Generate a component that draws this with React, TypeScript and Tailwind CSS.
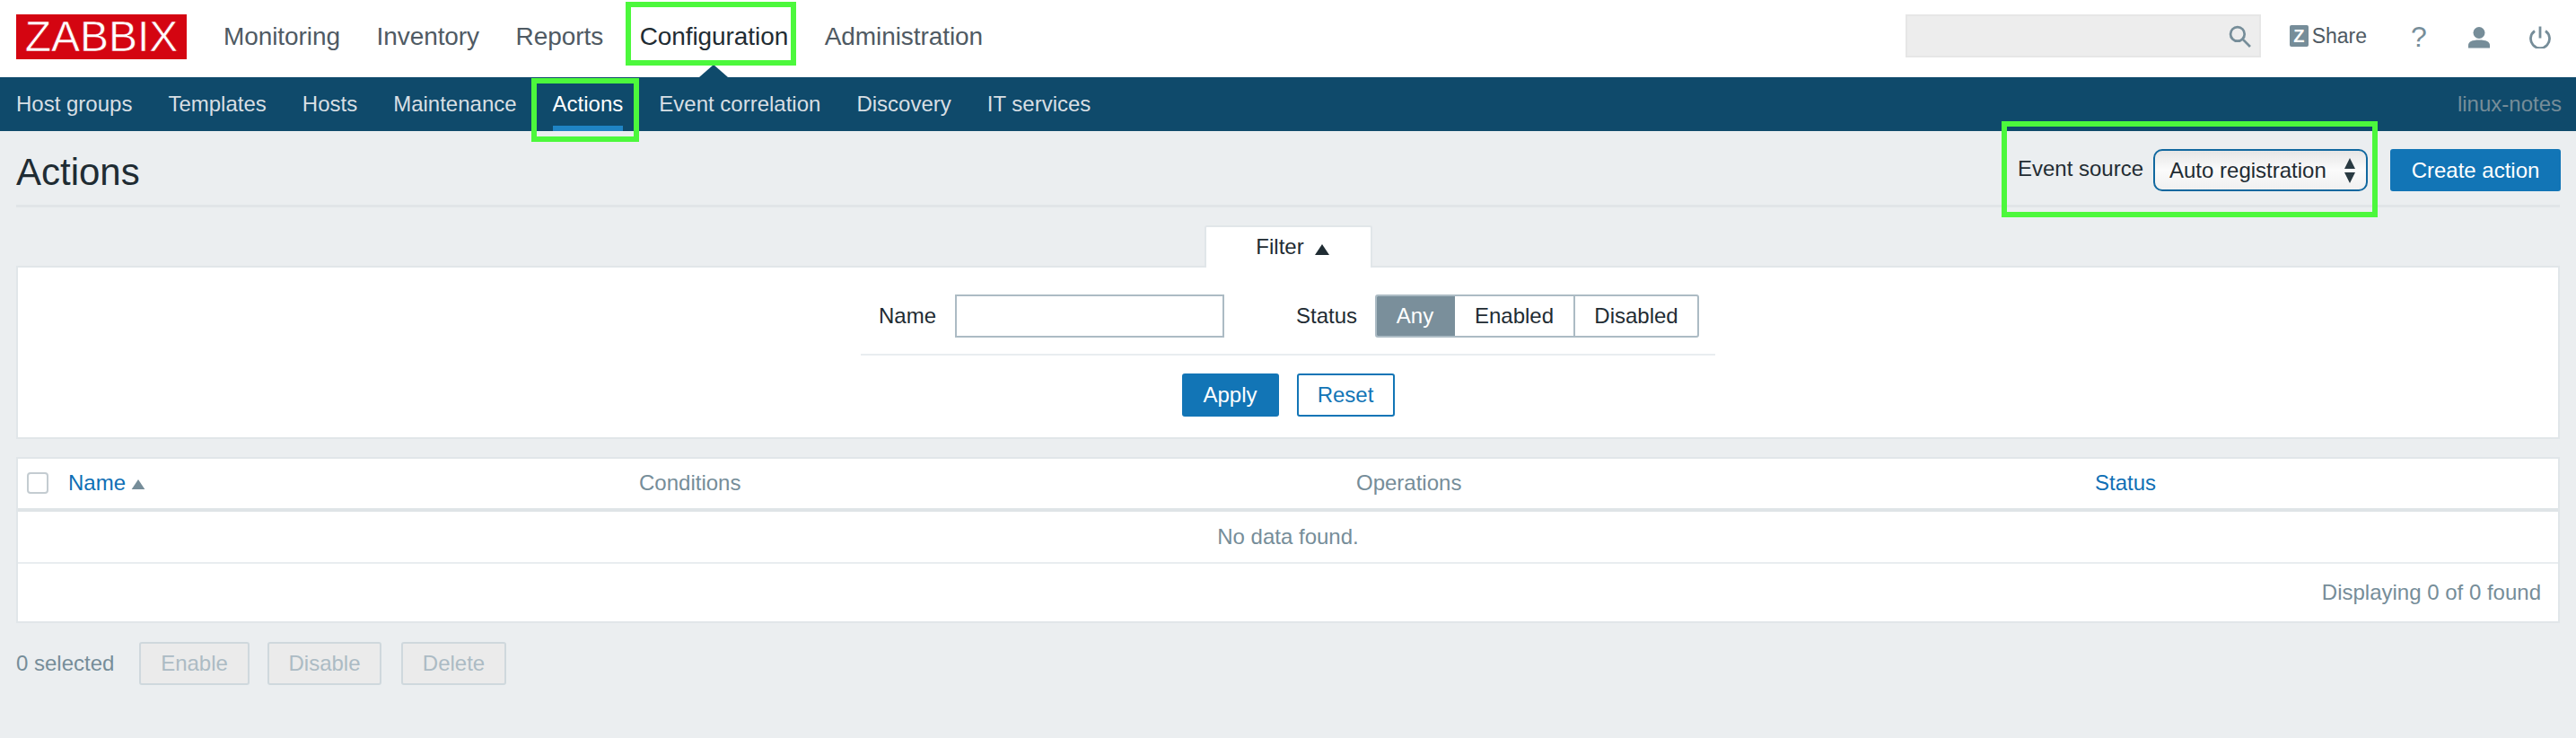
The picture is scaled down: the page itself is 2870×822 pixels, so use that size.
import React from 'react';

const topItems = ['Monitoring', 'Inventory', 'Reports', 'Configuration', 'Administration'];
const subItems = ['Host groups', 'Templates', 'Hosts', 'Maintenance', 'Actions', 'Event correlation', 'Discovery', 'IT services'];

const Triangle: React.FC<{ className?: string }> = ({ className }) => (
  <svg viewBox="0 0 16 12" className={className} fill="currentColor">
    <path d="M8 0 16 12H0z" />
  </svg>
);

const TopBar = () => (
  <header className="flex h-[86px] items-start bg-white pl-[18px] pr-[28px] pt-[16px]">
    <div className="flex h-[50px] w-[190px] items-center justify-center bg-[#d40511] text-[48px] leading-none text-white [-webkit-text-stroke:0.6px_#d40511]">
      ZABBIX
    </div>
    <nav className="ml-[41px] flex h-[50px] items-center gap-[40.6px] text-[28px] tracking-[-0.08px] text-[#4f5a63]">
      {topItems.map((item) => (
        <div key={item} className={item === 'Configuration' ? 'relative text-[#1f2c33]' : ''}>
          {item}
          {item === 'Configuration' && (
            <div className="absolute left-1/2 top-[52px] h-0 w-0 -translate-x-1/2 border-x-[16px] border-b-[14px] border-x-transparent border-b-[#0f4a6b]" />
          )}
        </div>
      ))}
    </nav>
    <div className="ml-auto flex items-start">
      <div className="flex h-[48px] w-[396px] items-center justify-end border-2 border-[#e6e6e6] bg-[#ededed] pr-[9px]">
        <svg viewBox="0 0 24 24" className="h-[25px] w-[25px] text-[#768d99]" fill="none" stroke="currentColor" strokeWidth="2.6">
          <circle cx="9.5" cy="9.5" r="7.5" />
          <path d="m15 15 8 8" />
        </svg>
      </div>
      <div className="ml-[32px] mt-[12px] flex h-[24px] w-[86px] items-center">
        <div className="flex h-[24px] w-[24px] items-center justify-center rounded-[2px] bg-[#768d99] text-[20px] font-bold leading-none text-white">Z</div>
        <span className="ml-[4px] text-[23px] leading-none text-[#4f5a63]">Share</span>
      </div>
      <div className="ml-[49px] mt-[9px] w-[15px] text-center text-[32px] leading-[32px] text-[#768d99]">?</div>
      <svg viewBox="0 0 24 24" className="ml-[49px] mt-[13px] h-[25px] w-[24px] text-[#768d99]" fill="currentColor">
        <circle cx="12" cy="7" r="6.5" />
        <path d="M0 24v-3c0-4 4-6 12-6s12 2 12 6v3z" />
      </svg>
      <svg viewBox="0 0 24 24" className="ml-[44px] mt-[13px] h-[25px] w-[24px] text-[#768d99]" fill="none" stroke="currentColor" strokeWidth="2.8">
        <path d="M12 0v13" />
        <path d="M6 5a10.5 10.5 0 1 0 12 0" />
      </svg>
    </div>
  </header>
);

const SubBar = () => (
  <nav className="flex h-[60px] items-stretch gap-[40px] bg-[#0f4a6b] px-[16px] pl-[18px] text-[24px] text-[#d8dfe4]">
    {subItems.map((item) => (
      <div
        key={item}
        className={`flex items-center border-y-[6px] border-t-transparent ${item === 'Actions' ? 'border-b-[#1f84c4] text-white' : 'border-b-transparent'}`}
      >
        {item}
      </div>
    ))}
    <div className="ml-auto flex items-center text-[#768d99]">linux-notes</div>
  </nav>
);

const TitleRow = () => (
  <div className="flex h-[85px] items-start justify-between border-b-[3px] border-[#e1e5e8] pt-[20px]">
    <h1 className="mt-[2px] text-[42px] leading-[47px] text-[#1f2c33]">Actions</h1>
    <div className="-mr-[1px] flex items-center">
      <span className="mb-[3px] mr-[11px] text-[24px] text-[#1f2c33]">Event source</span>
      <div className="flex h-[47px] w-[239px] items-center justify-between rounded-[10px] border-2 border-[#11689f] bg-gradient-to-b from-[#e6e6e6] via-[#fbfbfb] to-[#f0f0f0] pl-[16px] pr-[12px] text-[24px] text-[#1f2c33]">
        Auto registration
        <svg viewBox="0 0 12 30" className="h-[30px] w-[12px] text-[#2a3a42]" fill="currentColor">
          <path d="M6 1 12 13H0zM6 29 0 17h12z" />
        </svg>
      </div>
      <button className="ml-[25px] h-[47px] w-[190px] rounded-[3px] bg-[#1275b6] text-[24px] text-white">Create action</button>
    </div>
  </div>
);

const FilterPanel = () => (
  <div className="mt-[20px]">
    <div className="relative z-10 -mb-[2px] flex justify-center">
      <div className="flex h-[47px] w-[187px] items-start justify-center rounded-t-[3px] border-x-2 border-t-2 border-[#e1e6e9] bg-white pl-[10px] pt-[5px] text-[24px] leading-[34px] text-[#1f2c33]">
        Filter
        <Triangle className="ml-[12px] mt-[14px] h-[12px] w-[16px]" />
      </div>
    </div>
    <div className="flex h-[193px] flex-col items-center border-2 border-[#e1e6e9] bg-white">
      <div className="flex w-[952px] flex-col items-center">
        <div className="flex h-[98px] w-full items-start border-b-2 border-[#e9edf0] pl-[20px] pt-[30px] text-[24px] text-[#1f2c33]">
          <span className="w-[85px] leading-[48px]">Name</span>
          <input className="h-[48px] w-[300px] border-2 border-[#acbbc4] bg-white" />
          <span className="ml-[80px] w-[88px] leading-[48px]">Status</span>
          <div className="flex h-[48px] w-[361px] overflow-hidden rounded-[3px] border-2 border-[#acbbc4] leading-[44px]">
            <div className="-my-[2px] -ml-[2px] w-[89px] bg-[#7a8f9b] text-center leading-[48px] text-white">Any</div>
            <div className="w-[134px] border-r-2 border-[#acbbc4] text-center">Enabled</div>
            <div className="flex-1 text-center">Disabled</div>
          </div>
        </div>
        <div className="mt-[20px] flex gap-[20px] text-[24px]">
          <button className="h-[48px] w-[108px] rounded-[3px] bg-[#1275b6] text-white">Apply</button>
          <button className="h-[48px] w-[109px] rounded-[3px] border-2 border-[#1275b6] bg-white text-[#1275b6]">Reset</button>
        </div>
      </div>
    </div>
  </div>
);

const ActionsTable = () => (
  <div className="mt-[20px] border-2 border-[#e1e6e9] bg-white text-[24px]">
    <div className="grid h-[59px] grid-cols-[56px_636px_799px_823px_1fr] items-center border-b-4 border-[#dfe4e7] pb-[2px]">
      <div className="pl-[10px]">
        <input type="checkbox" className="block h-[24px] w-[24px] appearance-none rounded-[4px] border-2 border-[#c4ccd1] bg-white" />
      </div>
      <div className="flex items-center text-[#0f6fb5]">
        Name
        <Triangle className="ml-[6px] mt-[4px] h-[11px] w-[16px] text-[#768d99]" />
      </div>
      <div className="text-[#768d99]">Conditions</div>
      <div className="text-[#768d99]">Operations</div>
      <div className="text-[#0f6fb5]">Status</div>
    </div>
    <div className="flex h-[58px] items-center justify-center border-b-2 border-[#e9edf0] text-[#768d99]">No data found.</div>
    <div className="flex h-[64px] items-center justify-end pr-[19px] text-[#768d99]">Displaying 0 of 0 found</div>
  </div>
);

const BulkRow = () => {
  const disabled = 'h-[48px] rounded-[3px] border-2 border-[#cfd8dd] bg-[#ebebeb] text-[#acbbc4]';
  return (
    <div className="mt-[21px] flex items-center text-[24px]">
      <span className="w-[137px] text-[#768d99]">0 selected</span>
      <button className={`${disabled} w-[123px]`}>Enable</button>
      <button className={`${disabled} ml-[20px] w-[127px]`}>Disable</button>
      <button className={`${disabled} ml-[22px] w-[117px]`}>Delete</button>
    </div>
  );
};

export default function App() {
  return (
    <div className="relative min-h-screen overflow-hidden bg-[#ebeef0] font-['Liberation_Sans',Arial,sans-serif]">
      <TopBar />
      <SubBar />
      <main className="px-[18px]">
        <TitleRow />
        <FilterPanel />
        <ActionsTable />
        <BulkRow />
      </main>
      {/* green annotation boxes drawn on top of the screenshot */}
      <div className="absolute left-[697px] top-[2px] h-[71px] w-[190px] border-[6px] border-[#4cf83c]" />
      <div className="absolute left-[592px] top-[87px] h-[71px] w-[120px] border-[6px] border-[#4cf83c]" />
      <div className="absolute left-[2230px] top-[135px] h-[107px] w-[419px] border-[6px] border-[#4cf83c]" />
    </div>
  );
}
